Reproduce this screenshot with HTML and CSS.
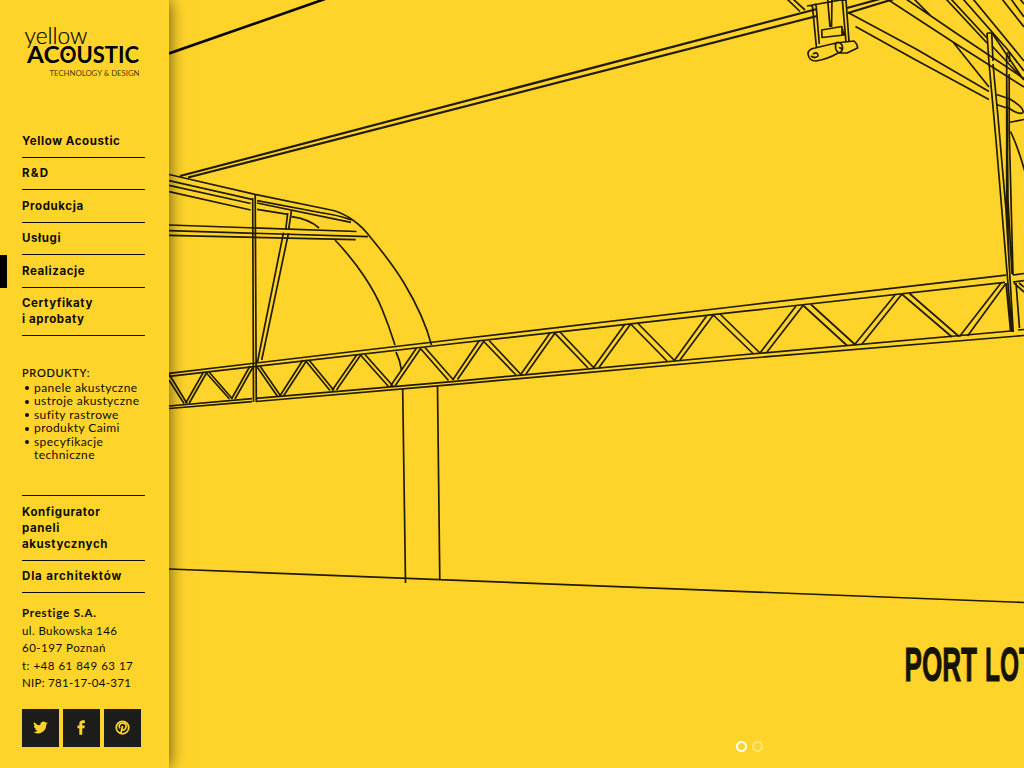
FILE: index.html
```html
<!DOCTYPE html>
<html lang="pl">
<head>
<meta charset="utf-8">
<title>Yellow Acoustic</title>
<link rel="stylesheet" href="styles.css">
</head>
<body>
<div class="page">
  <aside class="sidebar">
    <svg class="logo" viewBox="0 0 125 60" role="img" aria-label="yellow Acoustic">
      <text class="logo-thin" x="2.5" y="22.500" textLength="63" lengthAdjust="spacingAndGlyphs">yellow</text>
      <text class="logo-bold" x="5" y="41.700" textLength="32.500" lengthAdjust="spacingAndGlyphs">AC</text>
      <text class="logo-bold" x="37.500" y="41.700" textLength="17" lengthAdjust="spacingAndGlyphs">O</text>
      <text class="logo-bold" x="54.500" y="41.700" textLength="62.500" lengthAdjust="spacingAndGlyphs">USTIC</text>
      <circle cx="46" cy="33.300" r="1.600"/>
      <text class="logo-tag" x="27.5" y="55" textLength="90" lengthAdjust="spacingAndGlyphs">TECHNOLOGY &amp; DESIGN</text>
    </svg>
    <nav class="menu">
      <a class="item">Yellow Acoustic</a>
      <a class="item tight">R&amp;D</a>
      <a class="item">Produkcja</a>
      <a class="item">Usługi</a>
      <a class="item active">Realizacje</a>
      <a class="item">Certyfikaty<br>i aprobaty</a>
    </nav>
    <section class="products">
      <h2>PRODUKTY:</h2>
      <ul>
        <li>panele akustyczne</li>
        <li>ustroje akustyczne</li>
        <li>sufity rastrowe</li>
        <li>produkty Caimi</li>
        <li>specyfikacje<br>techniczne</li>
      </ul>
    </section>
    <nav class="menu lower">
      <a class="item">Konfigurator<br>paneli<br>akustycznych</a>
      <a class="item wide">Dla architektów</a>
    </nav>
    <address class="contact">
      <strong>Prestige S.A.</strong>
      <span>ul. Bukowska 146</span>
      <span class="loose">60-197 Poznań</span>
      <span class="loose">t: +48 61 849 63 17</span>
      <span class="narrow">NIP: 781-17-04-371</span>
    </address>
    <div class="social">
      <a><svg viewBox="0 0 24 24"><path d="M23.6 4.9a9.500 9.500 0 0 1-2.700.75 4.700 4.700 0 0 0 2.100-2.650 9.500 9.500 0 0 1-3 1.150 4.800 4.800 0 0 0-8.150 4.350A13.500 13.500 0 0 1 2 3.500a4.800 4.800 0 0 0 1.500 6.350 4.700 4.700 0 0 1-2.150-.6 4.800 4.800 0 0 0 3.800 4.700 4.800 4.800 0 0 1-2.150.1 4.800 4.800 0 0 0 4.450 3.300A9.600 9.600 0 0 1 .4 19.300 13.500 13.500 0 0 0 21.200 7.300a9.700 9.700 0 0 0 2.400-2.400z"/></svg></a>
      <a><svg viewBox="0 0 24 24"><path d="M8.500 23.500V13H5.500V8.800H8.500V6.200C8.500 2.500 10.600.5 14 .5c1.500 0 3 .1 3.400.2v4h-2.200c-1.700 0-2 .8-2 2v2.100h4l-.5 4.200h-3.500v10.500z"/></svg></a>
      <a><svg viewBox="0 0 24 24"><circle cx="12" cy="12" r="10" class="ring"/><path class="pin" d="M9.300 21.500L12.200 9.500M7.800 13.500C4.600 7.800 8.500 5 12.400 5c4 0 5.900 2.800 5.300 6-.7 4.700-5 6.300-6.600 3.500"/></svg></a>
    </div>
  </aside>

  <main class="stage">
    <svg class="drawing" viewBox="169 0 855 768">
      <!-- roof beams -->
      <path class="heavy" d="M169 53.500L325-1"/>
      <path class="beam" d="M180 176L817 9M188 177.500L817 16M847 8L880-1M848 13L894-1"/>
      <!-- canopy -->
      <path d="M169 174.500L255 194.300L331 210C342 212 357 221 367 233C381 250 392 263 404 283C416 303 426 324 431.500 345"/>
      <path d="M169 180.700L252 199.300M169 185.300L250.700 203.500M169 191.700L250.700 210M257 200.700L320 212.500Q338 215 351.500 220M257 203L351 222.300M257 209.300L288 214.300M291.500 216.700Q309 219 319 228"/>
      <path d="M169 225L356.500 231.500M169 230.700L368 236.700M169 235.300L355.700 239.700"/>
      <path d="M335 240Q352 258 364 276Q376 294 382 309Q389 326 395 345M396 352Q400 360 401.500 370"/>
      <path d="M252.700 198L253.500 402M255.200 194L256.300 402M291.500 210.500L288.700 229M287.700 213L285.800 229M283.500 232.700L257.500 362M288.500 233L261.700 360"/>
      <!-- truss chords -->
      <path d="M169 373.300L455 339.500L740 306L1006 275.200M169 376.300L455 343.500L740 311.700L1005 282.300"/>
      <path d="M169 406L252 398.700M256 398.300L455 381.300L740 355L1011 331M169 408.500L252 401.700M256 401.500L455 384.300L740 359L1024 335.500"/>
      <!-- truss diagonals -->
      <path d="M169 380L184 403.500M169 374L187 403.500M185.500 403.500L203.500 372M189 403.500L207 372M205.500 372L229.500 399M209 372L232.500 399M231.500 399L250 366M235 399L253 367M256.500 366L277.500 396.500M260 366L281 396.500M279.500 396.500L303 360M283.500 396L307 360M305 360L330 390.500M309 360L334 390.500M332 390.500L357 354.500M336.500 390L361 354.500M360 354.500L388.500 386.500M365 354.500L393 386M390.500 386L416.500 348M395 386L421 348M420 348L448.500 380.500M425 347.500L453.500 380M452.700 380L479 341M457.500 379.500L484 341M483.300 341L516 375M489 340.500L521 374.500M520.700 374.500L550 333M526 374L555 333M554.300 332.700L588 368M560 332L594 368M593.300 368L624.500 324.700M599 367.500L630.500 324.300M630.700 324L667 361M638 323.500L675 361M674 361L706.500 316M680 360L713 315.500M713.300 315L753 353.500M720 314L760 353M760 353L796 306M767 352L803 305.500M802.700 305L847 345.500M811 304.500L855 344.500M854.300 345L895 295M862 344L902 294M901.700 294L952 337M909.500 293.500L959 336.500M959.500 336.500L1001 283M967.500 336L1005.500 284"/>
      <!-- columns and floor -->
      <path d="M402.700 389L405.500 583M437.500 386L439.800 580M169 569L1024 602.500"/>
      <!-- right masts -->
      <path d="M987 33L989 63L996 140L1012 332M991.700 33L993 61M987 33H992M993 64L998 117L1006 210L1013.200 332M1006.700 53V200L1009 260M1009.500 53V62M1006.700 53H1010M1009.200 74V130L1013 275M1006.700 74L1008 200L1012 274M1006 283L1010.500 331"/>
      <path d="M1013 275L1024 273.500M1013 282L1024 280.700M1016 283L1019.500 328M1018 330L1024 329.500M1014 283L1024 292M1019 283L1024 287M1009 122.500L1024 119.500M1010.500 131.500Q1018 147 1025 172"/>
      <path d="M887-1L953 42L1024 87M906-1L961 36.500L1024 78.500M914-1L932 17M953 42L989 87M848 12.500L916 49L989 91.500M855.500 26.500L914 59L989 99.500M996.500 94.500L1010 99Q1026 109 1022.500 113Q1019 115 1007 107M996.500 104.500L1006 107.700"/>
      <path d="M946-1L987 43M951-1L987 38M963-1L1007 49L1024 71M973-1L1024 61M992 33L1021 76M992 46L1024 80M1002-1L1024 27M1011-1L1024 17M1020-1L1024 4"/>
      <!-- lamp -->
      <path d="M787-1L800 11.500M793-1L805 10M807 6L846-1M810 6L816 4M812.300 5L816.500 48M816 4L819.300 44M842.300 0L846 42M846 0L849 41.500M827.700 0L830 27M832 0L831.500 27M821.700 30L841.700 26.500L844 35L822 37.500ZM842 27V35"/>
      <path d="M808 54Q808 49 815 48L836 43M808 54Q809 61 816 61Q828 59 838 53M813 54Q818 51 818 56Q815 59 811 56M836 43Q834 50 839 53Q844 51 842 45Q839 41 836 43L845 42L854 41Q858 45 857.500 48L847 53L839 53M839 48Q841 47 842 50"/>
      <text class="title" x="904.500" y="681" textLength="72.500" lengthAdjust="spacingAndGlyphs">PORT</text>
      <text class="title" x="985" y="681" textLength="49" lengthAdjust="spacingAndGlyphs">LOT</text>
    </svg>
    <div class="dots"><i class="on"></i><i></i></div>
  </main>
</div>
</body>
</html>
```
FILE: styles.css
```css
* { box-sizing: border-box; }
body { margin: 0; background: #ffd42a; color: #0d0b02; font-family: Lato, "Open Sans", sans-serif; }
.page { display: flex; width: 100%; height: 768px; overflow: hidden; }
.sidebar {
  flex: none; width: 169px; height: 768px; padding: 21px 24px 0 22px;
  background: #ffd42a; box-shadow: 0 0 16px rgba(0, 0, 0, .65); z-index: 1;
}
.logo { display: block; width: 125px; height: 60px; }
.logo-thin { font-size: 24px; font-weight: 300; stroke: #0d0b02; stroke-width: .2; }
.logo-bold { font-size: 23.500px; font-weight: 700; }
.logo-tag { font-size: 8px; font-weight: 400; fill: #4a3d0a; }
.menu { display: flex; flex-direction: column; margin-top: 44px; }
.item {
  position: relative; padding: 7.500px 0 8px; border-bottom: 1px solid #0d0b02;
  font-family: Inter, sans-serif; font-size: 11.500px; font-weight: 700; line-height: 16px; letter-spacing: .6px; white-space: nowrap;
}
.tight { letter-spacing: 1.200px; }
.wide { letter-spacing: .85px; }
.active::before { content: ""; position: absolute; left: -22px; top: 0; width: 6.500px; height: 32.500px; background: #000; }
.products { margin-top: 28.500px; height: 130.500px; font-size: 12px; line-height: 13.500px; letter-spacing: .42px; }
.products h2 { margin: 0; font-size: 11px; font-weight: 500; line-height: 16px; letter-spacing: .7px; -webkit-text-stroke: .1px #0d0b02; }
.products ul { margin: 0; padding: 0 0 0 12px; list-style: none; }
.products li { position: relative; white-space: nowrap; }
.products li::before { content: ""; position: absolute; left: -9px; top: 5.500px; width: 4px; height: 4px; border-radius: 50%; background: #0d0b02; }
.lower { margin-top: 0; border-top: 1px solid #0d0b02; }
.contact { display: flex; flex-direction: column; margin-top: 11px; font-style: normal; font-size: 11.500px; line-height: 17.500px; letter-spacing: .4px; white-space: nowrap; }
.contact strong { font-weight: 600; letter-spacing: .85px; -webkit-text-stroke: .2px #0d0b02; }
.contact .narrow { letter-spacing: .27px; }
.contact .loose { letter-spacing: .5px; }
.social { display: flex; gap: 3.500px; margin-top: 17.500px; }
.social a { display: flex; flex: none; width: 37.300px; height: 37.500px; align-items: center; justify-content: center; background: #1c1c1a; }
.social svg { width: 15px; height: 15px; margin-top: -1px; fill: #ffd42a; }
.social .ring, .social .pin { fill: none; stroke: #ffd42a; stroke-width: 2.800; }
.stage { position: relative; flex: 1; min-width: 0; }
.drawing { display: block; width: 855px; height: 768px; }
.drawing path { fill: none; stroke: #211b03; stroke-width: 1.700; stroke-linejoin: round; }
.drawing .heavy { stroke: #080601; stroke-width: 2.600; }
.drawing .beam { stroke-width: 2.200; }
.title { fill: #171303; stroke: #171303; stroke-width: 1; font-family: "Liberation Sans", sans-serif; font-size: 48px; font-weight: 700; }
.dots { position: absolute; left: 567px; top: 741px; display: flex; gap: 5px; }
.dots i { width: 11px; height: 11px; border: 2px solid #fff; border-radius: 50%; opacity: .4; }
.dots .on { opacity: 1; }
```
